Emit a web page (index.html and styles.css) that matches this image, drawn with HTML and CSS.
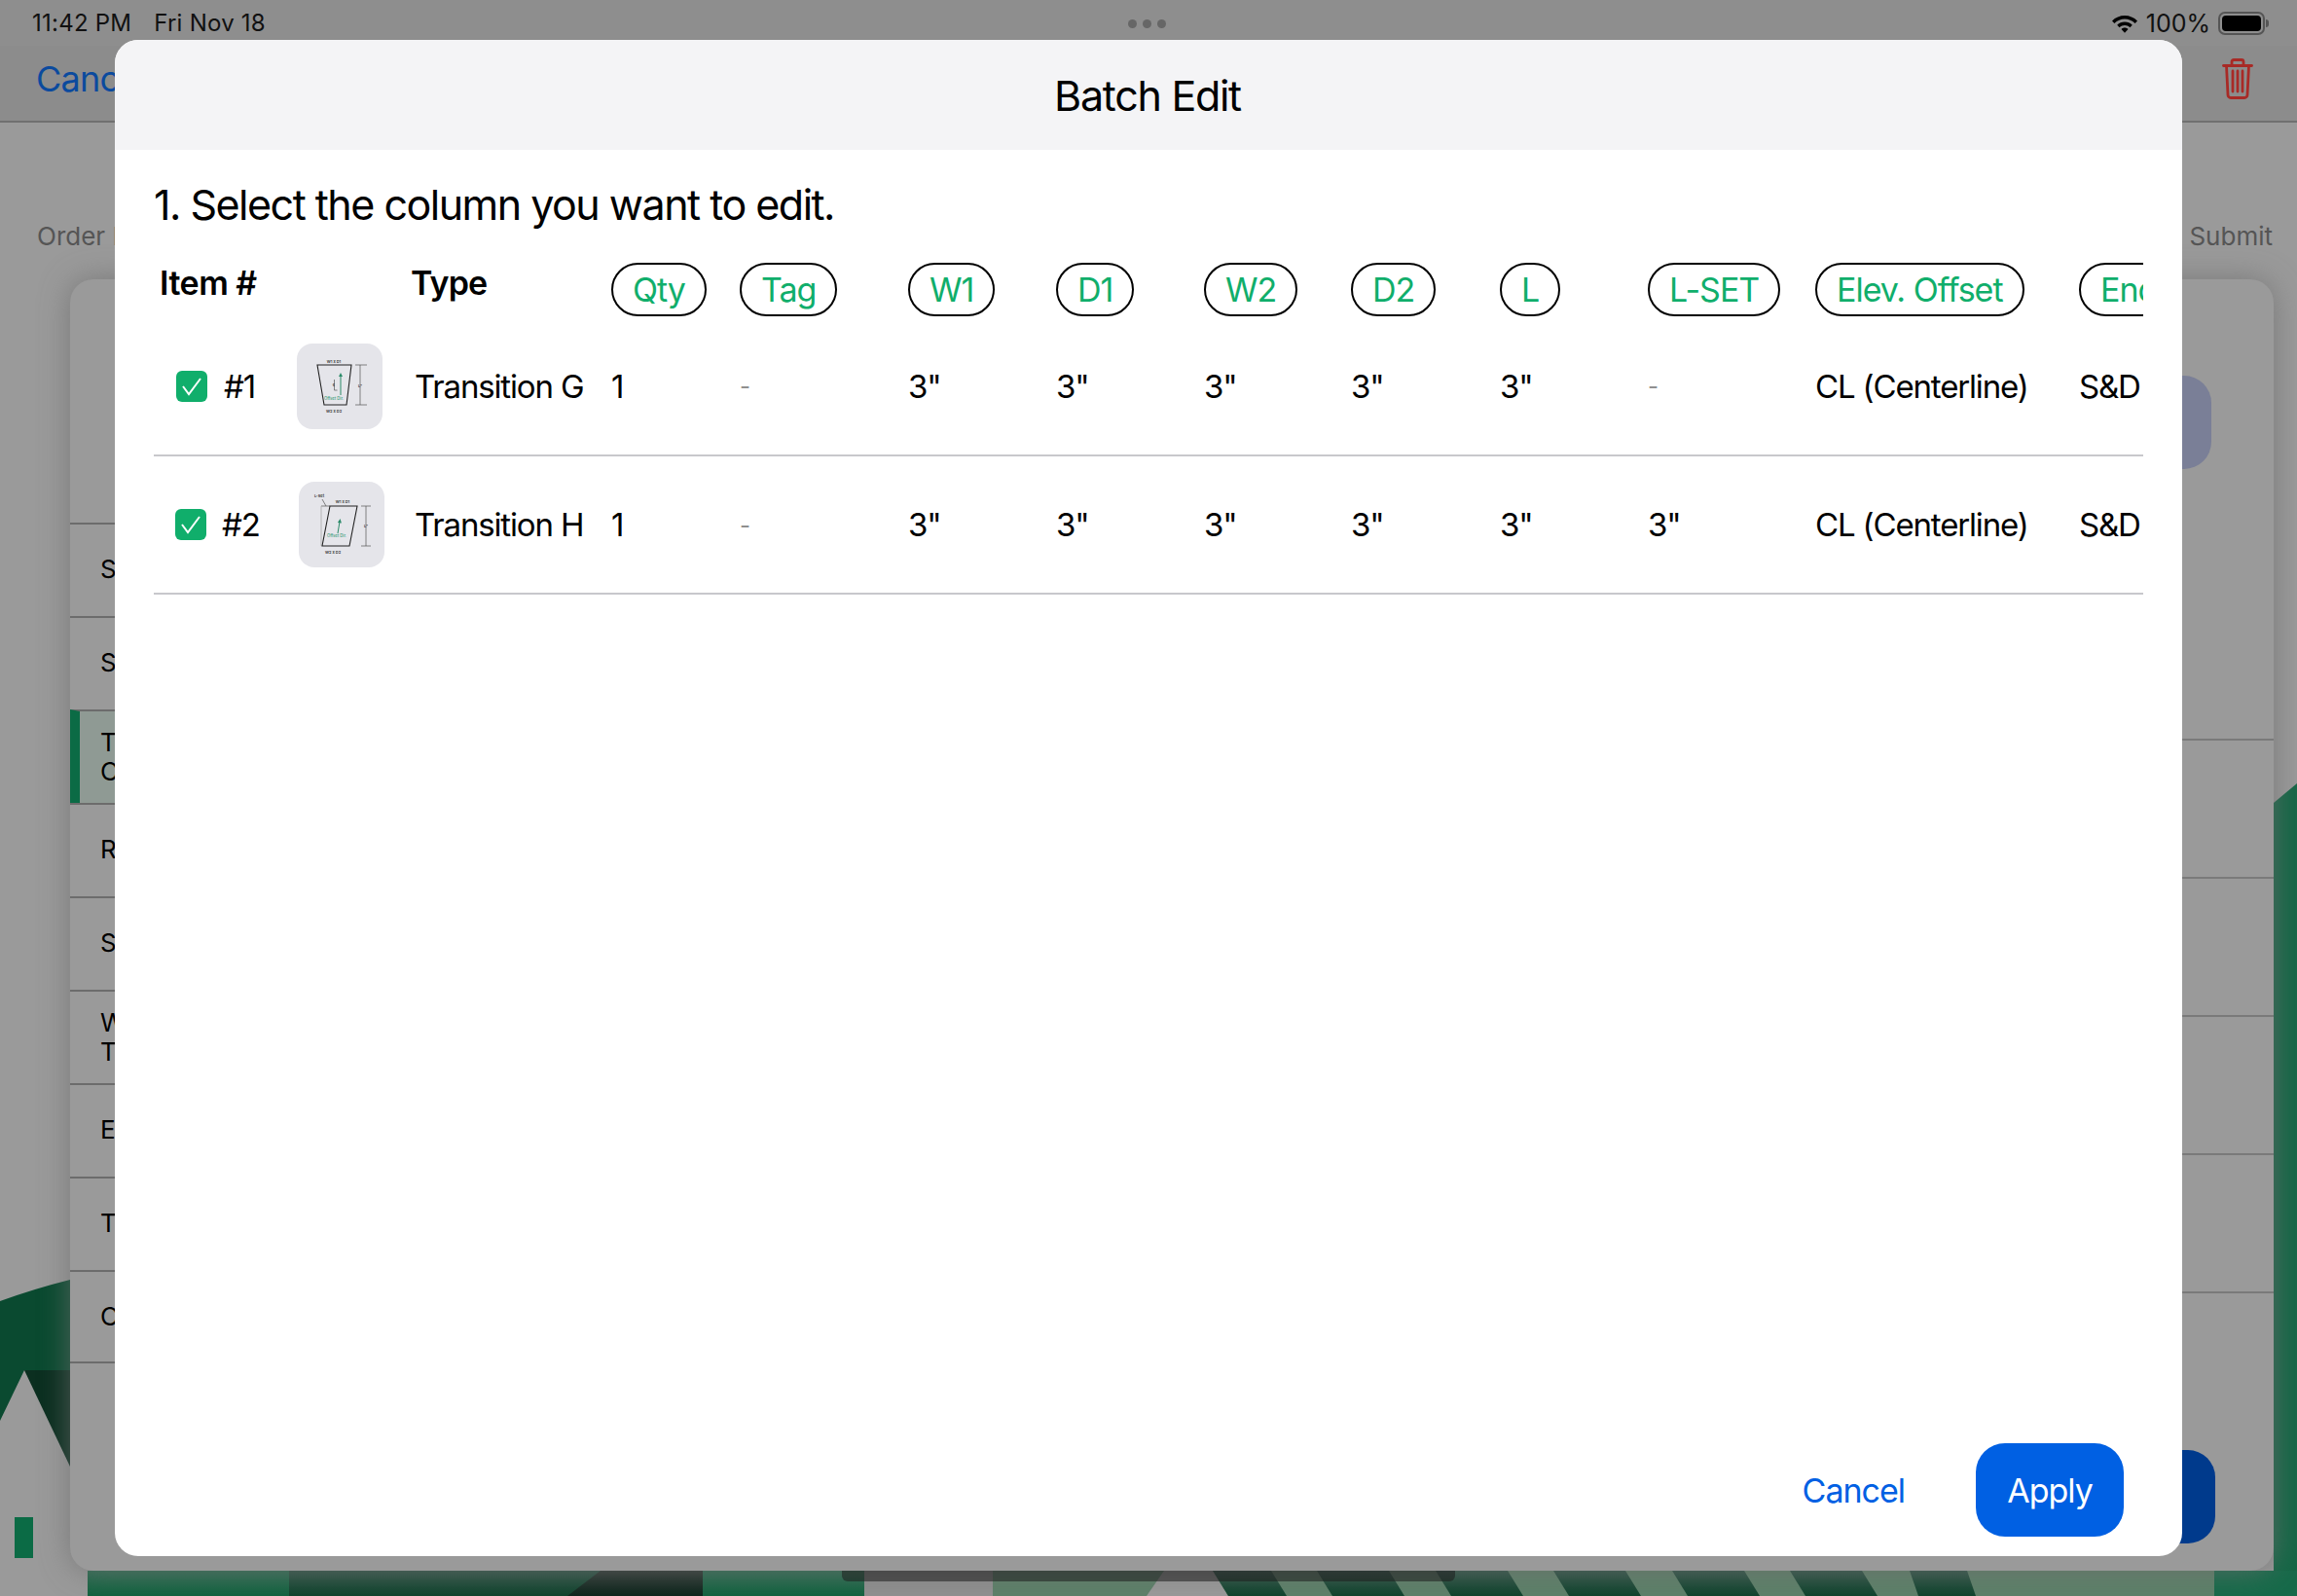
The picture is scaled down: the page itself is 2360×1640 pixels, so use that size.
FILE: index.html
```html
<!DOCTYPE html>
<html lang="en">
<head>
<meta charset="utf-8">
<title>Batch Edit</title>
<link rel="stylesheet" href="styles.css">
</head>
<body>
<svg class="backdrop" width="2360" height="1640" viewBox="0 0 2360 1640" aria-hidden="true">
  <defs>
    <linearGradient id="g1" x1="0" y1="0" x2="0" y2="1"><stop offset="0" stop-color="#2a6b50"/><stop offset="1" stop-color="#12623f"/></linearGradient>
    <linearGradient id="g2" x1="0" y1="0" x2="0" y2="1"><stop offset="0" stop-color="#2a5143"/><stop offset="1" stop-color="#0f432c"/></linearGradient>
    <linearGradient id="g3" x1="0" y1="0" x2="0" y2="1"><stop offset="0" stop-color="#27322e"/><stop offset="1" stop-color="#0d261c"/></linearGradient>
  </defs>
  <path fill="#0a4a30" d="M0 1337Q36 1324 72 1315V1408H25L0 1460Z"/>
  <path fill="#0b2f20" d="M25 1408H72V1507Z"/>
  <rect x="15" y="1559" width="19" height="42" fill="#0b6b45"/>
  <path fill="#156646" d="M2336 825L2360 805V1640H2336Z"/>
  <rect x="90" y="1614" width="207" height="26" fill="url(#g1)"/>
  <rect x="297" y="1614" width="425" height="26" fill="url(#g2)"/>
  <path fill="url(#g3)" d="M617 1614H722V1640H583Z"/>
  <rect x="722" y="1614" width="166" height="26" fill="url(#g1)"/>
  <rect x="888" y="1614" width="132" height="26" fill="#909090"/>
  <path fill="#5d8069" d="M1020 1614H1196L1178 1640H1020Z"/>
  <path fill="#5d8069" d="M1246 1614H2020L2030 1640H1262Z"/>
  <rect x="2020" y="1614" width="255" height="26" fill="#5d8069"/>
  <g fill="url(#g2)">
    <path d="M1246 1614h60l16 26h-60Z"/>
    <path d="M1353 1614h74l16 26h-74Z"/>
    <path d="M1475 1614h74l16 26h-74Z"/>
    <path d="M1596 1614h74l16 26h-74Z"/>
    <path d="M1718 1614h74l16 26h-74Z"/>
    <path d="M1839 1614h74l16 26h-74Z"/>
    <path d="M1962 1614h59l9 26h-59Z"/>
  </g>
  <rect x="2275" y="1614" width="85" height="26" fill="#176a4a"/>
</svg>

<div class="page">
  <div class="status-bar">
    <span class="clock">11:42 PM</span>
    <span class="date">Fri Nov 18</span>
  </div>
  <div class="nav-bar">
    <span class="nav-cancel">Cancel</span>
    <svg class="trash" width="32" height="42" viewBox="0 0 32 42" fill="none" stroke="#a82a26" stroke-width="2.8" stroke-linecap="round" stroke-linejoin="round" aria-hidden="true">
      <path d="M1.5 7.500h29"/>
      <path d="M10 7V3.500a2 2 0 0 1 2-2h8a2 2 0 0 1 2 2V7"/>
      <path d="M4.500 7.500l1.500 30a3 3 0 0 0 3 3h14a3 3 0 0 0 3-3l1.500-30"/>
      <path d="M11 13v21M16 13v21M21 13v21"/>
    </svg>
  </div>
  <div class="steps">
    <span class="step-text">Order Info</span>
    <span class="step-text">Submit</span>
  </div>
  <div class="panel">
    <div class="side-list">
      <div class="side-row">S</div>
      <div class="side-row">S</div>
      <div class="side-row is-active">T<br>C</div>
      <div class="side-row">R</div>
      <div class="side-row">S</div>
      <div class="side-row is-double">W<br>Ta</div>
      <div class="side-row">E</div>
      <div class="side-row">Ta</div>
      <div class="side-row">C</div>
    </div>
    <div class="detail-list">
      <div class="detail-action"></div>
      <div class="detail-row"></div>
      <div class="detail-row"></div>
      <div class="detail-row"></div>
      <div class="detail-row"></div>
      <div class="detail-row"></div>
    </div>
  </div>
</div>

<div class="peek-blue"></div>
<div class="home-bar"></div>

<div class="sys-dots"><i></i><i></i><i></i></div>
<div class="sys-right">
  <svg width="28" height="22" viewBox="0 0 28 22" aria-hidden="true">
    <path d="M14 3C9 3 4.600 5 1 8.400l2.400 2.600C6.300 8.100 10 6.500 14 6.500S21.700 8.100 24.600 11L27 8.400C23.400 5 19 3 14 3Z"/>
    <path d="M14 9.500c-3 0-5.700 1.200-7.800 3.200l2.400 2.500c1.500-1.400 3.400-2.200 5.400-2.200s3.900.8 5.400 2.200l2.400-2.500C19.700 10.700 17 9.500 14 9.500Z"/>
    <path d="M14 15.600c-1.400 0-2.600.6-3.500 1.400l3.500 3.700 3.500-3.700c-.9-.8-2.100-1.400-3.500-1.400Z"/>
  </svg>
  <span class="battery-text">100%</span>
  <span class="battery"><span class="battery-fill"></span></span>
</div>

<div class="modal">
  <header class="modal-head">Batch Edit</header>
  <main class="modal-body">
    <h2 class="instruction">1. Select the column you want to edit.</h2>
    <div class="table">
      <div class="row row-head">
        <div class="th th-item">Item #</div>
        <div></div>
        <div class="th th-type">Type</div>
        <div><button class="pill">Qty</button></div>
        <div><button class="pill">Tag</button></div>
        <div><button class="pill">W1</button></div>
        <div><button class="pill">D1</button></div>
        <div><button class="pill">W2</button></div>
        <div><button class="pill">D2</button></div>
        <div><button class="pill">L</button></div>
        <div><button class="pill">L-SET</button></div>
        <div><button class="pill">Elev. Offset</button></div>
        <div><button class="pill">End</button></div>
      </div>

      <div class="row row-item">
        <div class="item-cell">
          <span class="check"><svg width="22" height="20" viewBox="0 0 22 20" fill="none" stroke="#fff" stroke-width="2"><path d="M2 10l6 8L20 2"/></svg></span>
          <span>#1</span>
        </div>
        <div>
          <svg class="thumb" width="88" height="88" viewBox="0 0 88 88" aria-hidden="true">
            <text class="t-dark" x="38" y="19.500">W1 x D1</text>
            <path class="t-line" d="M21 22H56L51 63H28Z"/>
            <path class="t-green" d="M45 53V33"/><path fill="#2a8a68" d="M45 30l-2 4h4Z"/>
            <path class="t-thin" d="M38.500 37v11h3"/>
            <text class="t-dark" x="38" y="44">¢</text>
            <text class="t-teal" x="38" y="58">Offset Dir.</text>
            <text class="t-dark" x="38" y="70.500">W2 x D2</text>
            <path class="t-thin" d="M65 22V63M60 22H72M60 63H72"/>
            <text class="t-dark" x="65" y="44.500">L"</text>
          </svg>
        </div>
        <div class="type-cell">Transition G</div>
        <div>1</div>
        <div class="dash">-</div>
        <div>3"</div>
        <div>3"</div>
        <div>3"</div>
        <div>3"</div>
        <div>3"</div>
        <div class="dash">-</div>
        <div>CL (Centerline)</div>
        <div>S&amp;D</div>
      </div>

      <div class="row row-item row-second">
        <div class="item-cell">
          <span class="check"><svg width="22" height="20" viewBox="0 0 22 20" fill="none" stroke="#fff" stroke-width="2"><path d="M2 10l6 8L20 2"/></svg></span>
          <span>#2</span>
        </div>
        <div>
          <svg class="thumb" width="88" height="88" viewBox="0 0 88 88" aria-hidden="true">
            <text class="t-dark" x="21" y="16">L-Set</text>
            <path class="t-thin" d="M24 18l4 7M23 25h9"/>
            <path class="t-pale" d="M23 25V66"/>
            <text class="t-dark" x="45" y="21.500">W1 x D1</text>
            <path class="t-line" d="M32 25H60L52 66H24Z"/>
            <path class="t-green" d="M40 53L42 41"/><path fill="#2a8a68" d="M42.500 38l-2.600 4 4 .6Z"/>
            <text class="t-teal" x="39" y="56.500">Offset Dir.</text>
            <text class="t-dark" x="35" y="73.500">W2 x D2</text>
            <path class="t-thin" d="M69 25V66M64 25H74M64 66H74"/>
            <text class="t-dark" x="69" y="47">L"</text>
          </svg>
        </div>
        <div class="type-cell">Transition H</div>
        <div>1</div>
        <div class="dash">-</div>
        <div>3"</div>
        <div>3"</div>
        <div>3"</div>
        <div>3"</div>
        <div>3"</div>
        <div>3"</div>
        <div>CL (Centerline)</div>
        <div>S&amp;D</div>
      </div>
    </div>
  </main>
  <footer class="modal-foot">
    <button class="btn-link">Cancel</button>
    <button class="btn-apply">Apply</button>
  </footer>
</div>
</body>
</html>
```

FILE: styles.css
```css
* { box-sizing: border-box; }

html, body {
  margin: 0;
  padding: 0;
  width: 2360px;
  height: 1640px;
  overflow: hidden;
}

body {
  position: relative;
  background: #9a9a9a;
  font-family: Inter, "Liberation Sans", sans-serif;
  color: #000;
}

.backdrop {
  position: absolute;
  left: 0;
  top: 0;
}

.page {
  position: absolute;
  left: 0;
  top: 0;
  width: 2360px;
  height: 1640px;
  display: flex;
  flex-direction: column;
}

/* Dimmed page behind the sheet */
.status-bar {
  height: 47px;
  background: #8e8e8e;
  display: flex;
  align-items: center;
  gap: 23px;
  padding: 0 0 0 33px;
  font-size: 24px;
  letter-spacing: 0.01em;
  color: #111;
}

.nav-bar {
  height: 79px;
  background: #8c8c8c;
  border-bottom: 2px solid #707070;
  display: flex;
  align-items: center;
  justify-content: space-between;
  padding: 0 45px 10px 37px;
}

.nav-cancel {
  font-size: 36px;
  letter-spacing: -0.02em;
  color: #0b4a9e;
}

.trash { display: block; }

.steps {
  height: 161px;
  display: flex;
  justify-content: space-between;
  padding: 101px 25px 0 38px;
}

.step-text {
  font-size: 26px;
  letter-spacing: 0;
  color: #555;
}

.panel {
  width: 2264px;
  height: 1327px;
  margin-left: 72px;
  background: #9a9a9a;
  border-radius: 24px;
  box-shadow: 0 0 30px rgba(110, 110, 110, 0.75);
  display: flex;
  position: relative;
}

.side-list {
  width: 400px;
  padding-top: 250px;
}

.side-row {
  height: 96px;
  border-top: 2px solid #6c6c6c;
  padding: 31px 0 0 31px;
  font-size: 26px;
  line-height: 30px;
}

.side-row.is-double { padding-top: 17px; }

.side-row.is-active {
  background: #8f9a94;
  border-left: 10px solid #0b6b45;
  padding: 17px 0 0 21px;
}

.side-row:last-child { border-bottom: 2px solid #6c6c6c; }

.detail-list {
  flex: 1;
  position: relative;
  padding-top: 472px;
}

.detail-row {
  height: 142px;
  border-top: 2px solid #7a7a7a;
}

.detail-action {
  position: absolute;
  right: 64px;
  top: 99px;
  width: 140px;
  height: 96px;
  background: #7a7f97;
  border-radius: 28px;
}

.peek-blue {
  position: absolute;
  left: 2150px;
  top: 1490px;
  width: 126px;
  height: 96px;
  background: #003a8c;
  border-radius: 28px;
}

.home-bar {
  position: absolute;
  left: 865px;
  top: 1614px;
  width: 630px;
  height: 11px;
  background: rgba(30, 30, 30, 0.55);
  border-radius: 0 0 6px 6px;
}

.sys-dots {
  position: absolute;
  left: 1159px;
  top: 20px;
  display: flex;
  gap: 6px;
}

.sys-dots i {
  display: block;
  width: 9px;
  height: 9px;
  border-radius: 50%;
  background: #666;
}

.sys-right {
  position: absolute;
  right: 33px;
  top: 11px;
  display: flex;
  align-items: center;
  gap: 8px;
  height: 26px;
}

.battery-text {
  font-size: 25px;
  letter-spacing: 0;
  color: #111;
}

.battery {
  display: block;
  width: 48px;
  height: 24px;
  border: 2px solid #555;
  border-radius: 7px;
  padding: 2px;
  position: relative;
}

.battery::after {
  content: "";
  position: absolute;
  right: -6px;
  top: 6px;
  width: 3px;
  height: 8px;
  background: #555;
  border-radius: 0 3px 3px 0;
}

.battery-fill {
  display: block;
  height: 100%;
  background: #000;
  border-radius: 4px;
}

/* Batch Edit sheet */
.modal {
  position: absolute;
  left: 118px;
  top: 41px;
  width: 2124px;
  height: 1558px;
  background: #fff;
  border-radius: 24px;
  overflow: hidden;
  display: flex;
  flex-direction: column;
}

.modal-head {
  height: 113px;
  flex: none;
  background: #f4f4f6;
  display: flex;
  align-items: center;
  justify-content: center;
  font-size: 43px;
  letter-spacing: -0.03em;
  padding-right: 2px;
}

.modal-body {
  flex: 1;
  padding: 31px 39px 0 40px;
  min-height: 0;
}

.instruction {
  margin: 0;
  font-size: 43px;
  line-height: 50px;
  font-weight: 400;
  letter-spacing: -0.035em;
}

.table {
  margin-top: 35px;
  width: 2044px;
  overflow: hidden;
}

.row {
  display: grid;
  grid-template-columns: 147px 118px 205px 132px 173px 152px 152px 151px 153px 152px 172px 271px 90px;
  align-items: center;
  white-space: nowrap;
}

.row-head {
  height: 56px;
  align-items: start;
}

.th {
  font-size: 34px;
  font-weight: 600;
  letter-spacing: -0.015em;
  line-height: 41px;
}

.th-item { padding-left: 6px; }
.th-type { margin-left: -1px; letter-spacing: -0.025em; }

.pill {
  display: inline-flex;
  align-items: center;
  height: 55px;
  padding: 0 20px;
  border: 2px solid #000;
  border-radius: 28px;
  background: #fff;
  font: inherit;
  font-size: 34px;
  letter-spacing: -0.03em;
  color: #10ae6b;
}

.row-item {
  height: 143px;
  border-bottom: 2px solid #c8c8cc;
  font-size: 33px;
  letter-spacing: -0.035em;
}

.row-second { height: 142px; }

.type-cell { padding-left: 3px; }

.item-cell {
  display: flex;
  align-items: center;
  gap: 17px;
  padding-left: 23px;
}

.row-second .item-cell { padding-left: 22px; gap: 16px; }
.row-second .thumb { margin-left: 2px; }

.check {
  width: 32px;
  height: 32px;
  background: #10ae6b;
  border-radius: 6px;
  display: flex;
  align-items: center;
  justify-content: center;
}

.thumb {
  display: block;
  background: #e5e5ea;
  border-radius: 16px;
}

.thumb text {
  font-size: 4px;
  font-weight: 600;
  text-anchor: middle;
  letter-spacing: 0;
}

.t-dark { fill: #333; }
.thumb .t-teal { fill: #3c9c7c; font-size: 4.200px; font-weight: 500; }
.t-line { fill: none; stroke: #222; stroke-width: 1.1; }
.t-green { fill: none; stroke: #2a8a68; stroke-width: 1; }
.t-thin { fill: none; stroke: #555; stroke-width: 0.7; }
.t-pale { fill: none; stroke: #aaa; stroke-width: 0.8; }

.dash { color: #8f8f8f; font-size: 24px; }

.modal-foot {
  flex: none;
  display: flex;
  justify-content: flex-end;
  align-items: center;
  gap: 73px;
  padding: 0 60px 20px 0;
}

.btn-link {
  border: 0;
  background: none;
  padding: 0;
  font: inherit;
  font-size: 34px;
  letter-spacing: -0.03em;
  color: #0060e3;
}

.btn-apply {
  width: 152px;
  height: 96px;
  border: 0;
  border-radius: 30px;
  background: #0060e3;
  font: inherit;
  font-size: 34px;
  letter-spacing: -0.03em;
  color: #fff;
}
```
